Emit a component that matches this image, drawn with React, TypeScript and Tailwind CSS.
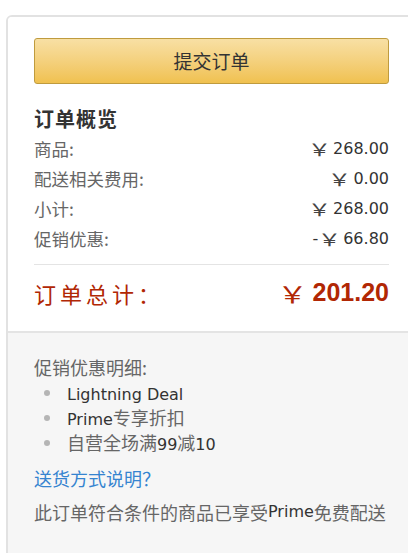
import React from "react";

function Row({ label, value, neg }: { label: string; value: string; neg?: boolean }) {
  return (
    <div className="flex h-[30px] items-center justify-between">
      <span className="text-[17.5px] text-[#666]">{label}</span>
      <span className="flex items-center font-['DejaVu_Sans',sans-serif] text-[16px] text-[#333]">
        {neg && <span className="mr-[3px]">-</span>}
        <span className="inline-block scale-x-[1.35] font-['Noto_Sans_CJK_SC',sans-serif] text-[17px] text-[#444]">
          ￥
        </span>
        <span className="ml-[5px]">{value}</span>
      </span>
    </div>
  );
}

function Bullet({ children }: { children: React.ReactNode }) {
  return (
    <li className="flex h-[25px] items-center">
      <span className="ml-[10px] mr-[17px] h-[6px] w-[6px] rounded-full bg-[#b5b5b5]" />
      <span className="text-[18px] text-[#666]">{children}</span>
    </li>
  );
}

const L = ({ children }: { children: React.ReactNode }) => (
  <span className="font-['DejaVu_Sans',sans-serif] text-[16px] text-[#333]">{children}</span>
);

export default function App() {
  return (
    <div className="h-[553px] w-[408px] overflow-hidden bg-white pl-[6px] pt-[15px] font-['Noto_Sans_CJK_SC','Noto_Sans',sans-serif]">
      <div className="flex h-[560px] w-[411px] flex-col overflow-hidden rounded-t-[6px] border-2 border-[#e2e2e2]">
        <div className="bg-white px-[26px] pb-[17px] pt-[21px]">
          <button className="flex h-[46px] w-full items-center justify-center rounded-[3px] border border-[#bf9b3e] bg-gradient-to-b from-[#f8e0a4] to-[#f0c14f] text-[19px] text-[#333]">
            提交订单
          </button>
          <div className="mt-[20px] flex h-[30px] items-center text-[20px] font-bold tracking-[1px] text-[#333]">
            订单概览
          </div>
          <Row label="商品:" value="268.00" />
          <Row label="配送相关费用:" value="0.00" />
          <Row label="小计:" value="268.00" />
          <Row label="促销优惠:" value="66.80" neg />
          <div className="mt-[10px] h-px bg-[#e4e4e4]" />
          <div className="mt-[7px] flex h-[42px] items-center justify-between text-[#b12704]">
            <span className="text-[22px] tracking-[4px]">订单总计：</span>
            <span className="flex items-center">
              <span className="inline-block scale-x-[1.3] text-[23px]">￥</span>
              <span className="ml-[9px] font-['Liberation_Sans',Arial,sans-serif] text-[25px] font-bold">
                201.20
              </span>
            </span>
          </div>
        </div>
        <div className="flex-1 border-t-2 border-[#e4e4e4] bg-[#f6f6f6] px-[26px] pt-[21px]">
          <div className="flex h-[26px] items-center text-[18px] text-[#666]">促销优惠明细:</div>
          <ul>
            <Bullet>
              <L>Lightning Deal</L>
            </Bullet>
            <Bullet>
              <L>Prime</L>专享折扣
            </Bullet>
            <Bullet>
              自营全场满<L>99</L>减<L>10</L>
            </Bullet>
          </ul>
          <div className="mt-[10px] flex h-[26px] items-center text-[18px] text-[#3584d0]">送货方式说明？</div>
          <div className="mt-[8px] flex h-[26px] items-center whitespace-nowrap text-[18px] text-[#666]">
            此订单符合条件的商品已享受<L>Prime</L>免费配送
          </div>
        </div>
      </div>
    </div>
  );
}
